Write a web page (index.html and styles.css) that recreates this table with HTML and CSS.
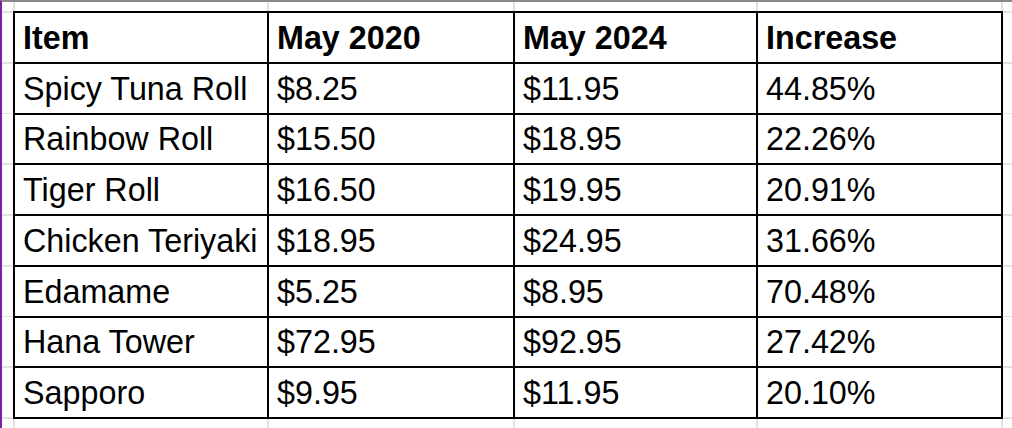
FILE: index.html
```html
<!DOCTYPE html>
<html lang="en">
<head>
<meta charset="utf-8">
<title>Sushi prices</title>
<link rel="stylesheet" href="styles.css">
</head>
<body>
<div class="sheet">
  <div class="price-table">
    <div class="cell head">Item</div>
    <div class="cell head">May 2020</div>
    <div class="cell head">May 2024</div>
    <div class="cell head">Increase</div>

    <div class="cell">Spicy Tuna Roll</div>
    <div class="cell">$8.25</div>
    <div class="cell">$11.95</div>
    <div class="cell">44.85%</div>

    <div class="cell">Rainbow Roll</div>
    <div class="cell">$15.50</div>
    <div class="cell">$18.95</div>
    <div class="cell">22.26%</div>

    <div class="cell">Tiger Roll</div>
    <div class="cell">$16.50</div>
    <div class="cell">$19.95</div>
    <div class="cell">20.91%</div>

    <div class="cell">Chicken Teriyaki</div>
    <div class="cell">$18.95</div>
    <div class="cell">$24.95</div>
    <div class="cell">31.66%</div>

    <div class="cell">Edamame</div>
    <div class="cell">$5.25</div>
    <div class="cell">$8.95</div>
    <div class="cell">70.48%</div>

    <div class="cell">Hana Tower</div>
    <div class="cell">$72.95</div>
    <div class="cell">$92.95</div>
    <div class="cell">27.42%</div>

    <div class="cell">Sapporo</div>
    <div class="cell">$9.95</div>
    <div class="cell">$11.95</div>
    <div class="cell">20.10%</div>
  </div>
</div>
</body>
</html>
```

FILE: styles.css
```css
html, body {
  margin: 0;
  padding: 0;
  background: #ffffff;
}

body {
  width: 1012px;
  height: 428px;
  overflow: hidden;
  font-family: "Liberation Sans", Arial, sans-serif;
  color: #000;
}

.sheet {
  box-sizing: border-box;
  width: 1012px;
  height: 428px;
  border-left: 2px solid #7a1fa6;
  border-top: 2px solid #8a8a8a;
  padding: 9px 0 0 11px;
  background-color: #fff;
  background-origin: border-box;
  background-image:
    linear-gradient(to right,
      transparent 0 13px, #e2e2e2 13px 15px,
      transparent 15px 267px, #e2e2e2 267px 269px,
      transparent 269px 513px, #e2e2e2 513px 515px,
      transparent 515px 756px, #e2e2e2 756px 758px,
      transparent 758px 1001px, #e2e2e2 1001px 1003px,
      transparent 1003px),
    repeating-linear-gradient(to bottom,
      transparent 0 11px, #e2e2e2 11px 13px, transparent 13px 50.75px);
}

.price-table {
  display: grid;
  grid-template-columns: 254px 246px 243px 245px;
  grid-auto-rows: 50.75px;
  width: max-content;
  border-left: 2px solid #000;
  border-top: 2px solid #000;
  background: #fff;
}

.cell {
  box-sizing: border-box;
  display: flex;
  align-items: flex-end;
  border-right: 2px solid #000;
  border-bottom: 2px solid #000;
  padding: 0 0 6px 8px;
  font-size: 32.3px;
  line-height: 36px;
  white-space: nowrap;
}

.head {
  font-weight: bold;
}
```
